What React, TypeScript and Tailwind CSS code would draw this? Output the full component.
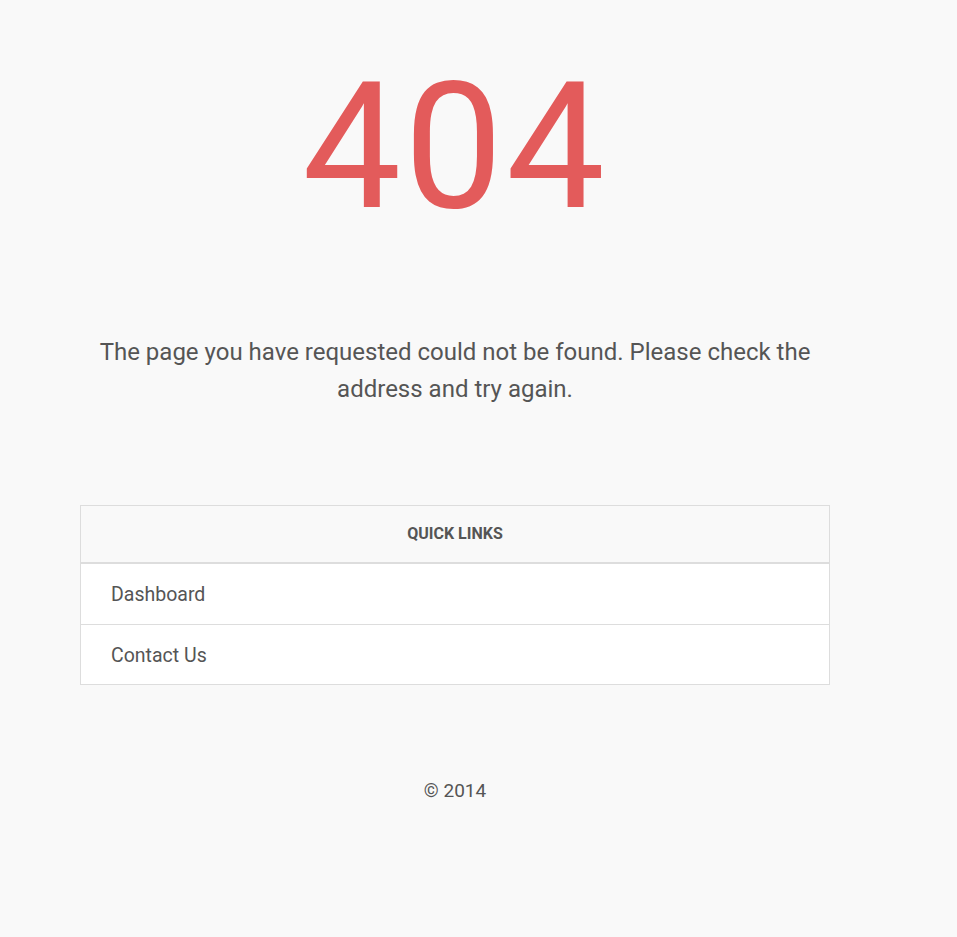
import React from 'react';

const links = ['Dashboard', 'Contact Us'];

export default function App() {
  return (
    <div className="min-h-[937px] bg-[#f9f9f9] text-[#555] font-['Roboto',sans-serif]">
      <div className="ml-[80px] w-[750px] pt-[52px]">
        <h1 className="text-center text-[176px] leading-[191px] font-normal tracking-[3px] text-[#e35b5b]">404</h1>

        <p className="mt-[91px] text-center text-[24px] leading-[37px]">
          The page you have requested could not be found. Please check the address and try again.
        </p>

        <div className="mt-[97px] border border-[#ddd] bg-white">
          <div className="flex h-[58px] items-center justify-center border-b-2 border-[#ddd] bg-[#f9f9f9] text-[16px] font-bold uppercase">
            Quick Links
          </div>
          {links.map((l, i) => (
            <a
              key={l}
              href="#"
              className={`flex h-[60px] items-center px-[30px] pt-[2px] text-[19.5px] ${i > 0 ? 'border-t border-[#ddd]' : ''}`}
            >
              {l}
            </a>
          ))}
        </div>

        <footer className="mt-[92px] text-center text-[19px]">© 2014</footer>
      </div>
    </div>
  );
}
